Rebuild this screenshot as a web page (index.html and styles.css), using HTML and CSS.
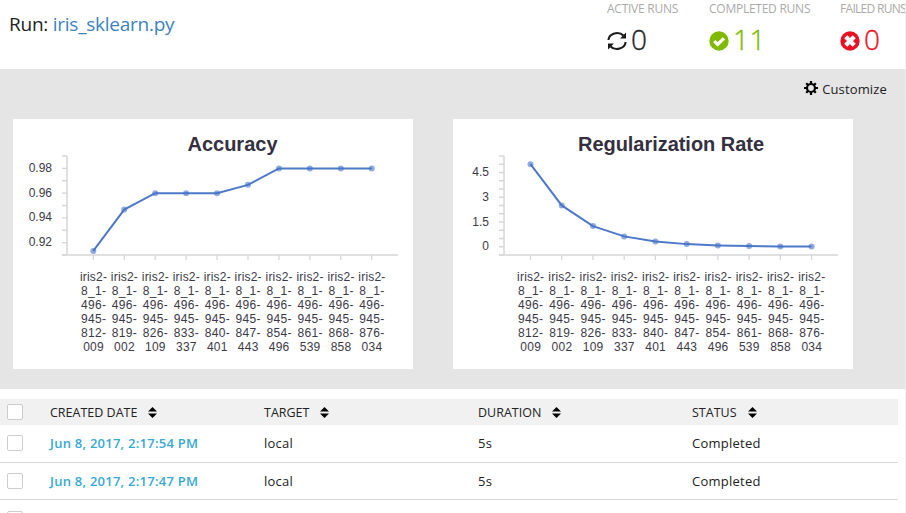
FILE: index.html
```html
<!DOCTYPE html>
<html lang="en">
<head>
<meta charset="utf-8">
<title>Run: iris_sklearn.py</title>
<link rel="stylesheet" href="styles.css">
</head>
<body>
<div class="page">
  <header class="top">
    <h1 class="title"><span class="run">Run:</span> <a>iris_sklearn.py</a></h1>
    <div class="stats">
      <div class="stat active">
        <div class="label">ACTIVE RUNS</div>
        <div class="value"><svg width="20" height="20" viewBox="0 0 20 20"><g fill="none" stroke="#1b1b1b" stroke-width="2.1"><path d="M1.4 9C2 2.4 11.5-.4 16.4 4.6M18.6 11C18 17.6 8.5 20.4 3.6 15.4"/></g><path fill="#1b1b1b" d="M19 1.4v6h-6zM1 18.6v-6h6z"/></svg><span>0</span></div>
      </div>
      <div class="stat completed">
        <div class="label">COMPLETED RUNS</div>
        <div class="value"><svg width="20" height="20" viewBox="0 0 20 20"><circle cx="10" cy="10" r="9.7" fill="#7fba00"/><path d="M5.2 10.2l3.4 3.3 6.3-6.2" fill="none" stroke="#fff" stroke-width="3.2"/></svg><span>11</span></div>
      </div>
      <div class="stat failed">
        <div class="label">FAILED RUNS</div>
        <div class="value"><svg width="20" height="20" viewBox="0 0 20 20"><circle cx="10" cy="10" r="9.7" fill="#e81123"/><path d="M5.8 5.8l8.4 8.4M14.2 5.8l-8.4 8.4" stroke="#fff" stroke-width="4.4"/></svg><span>0</span></div>
      </div>
    </div>
  </header>
  <section class="panel">
    <div class="toolbar"><svg width="14" height="14" viewBox="-7 -7 14 14"><circle r="4" fill="none" stroke="#000" stroke-width="2.2"/><path d="M0-7V-4M0 7V4M-7 0H-4M7 0H4M-4.8-4.8L-3-3M4.8 4.8L3 3M4.8-4.8L3-3M-4.8 4.8L-3 3" stroke="#000" stroke-width="2.2"/></svg><span>Customize</span></div>
    <div class="cards">
      <div class="card"><svg id="accuracy" width="400" height="250"></svg></div>
      <div class="card"><svg id="rate" width="400" height="250"></svg></div>
    </div>
  </section>
  <section class="table">
    <div class="row head">
      <i class="box"></i>
      <span>CREATED DATE<svg class="sort" viewBox="0 0 9 11"><path d="M4.5 0L9 4.6H0zM4.5 11L9 6.4H0z"/></svg></span>
      <span>TARGET<svg class="sort" viewBox="0 0 9 11"><path d="M4.5 0L9 4.6H0zM4.5 11L9 6.4H0z"/></svg></span>
      <span>DURATION<svg class="sort" viewBox="0 0 9 11"><path d="M4.5 0L9 4.6H0zM4.5 11L9 6.4H0z"/></svg></span>
      <span>STATUS<svg class="sort" viewBox="0 0 9 11"><path d="M4.5 0L9 4.6H0zM4.5 11L9 6.4H0z"/></svg></span>
    </div>
    <div class="row first"><i class="box"></i><a class="date">Jun 8, 2017, 2:17:54 PM</a><span>local</span><span>5s</span><span class="status">Completed</span></div>
    <div class="row"><i class="box"></i><a class="date">Jun 8, 2017, 2:17:47 PM</a><span>local</span><span>5s</span><span class="status">Completed</span></div>
    <div class="row last"><i class="box"></i></div>
  </section>
</div>
<script src="charts.js"></script>
</body>
</html>
```
FILE: styles.css
```css
* { box-sizing: border-box; }
body {
  margin: 0;
  background: #fff;
  color: #222;
  font-family: "Open Sans", "Noto Sans", sans-serif;
  overflow: hidden;
}
.page {
  width: 906px;
  height: 513px;
  overflow: hidden;
  border-right: 1px solid #eee;
}
.top {
  height: 69px;
  display: flex;
  justify-content: space-between;
  overflow: hidden;
}
.title {
  margin: 9px 0 0 9px;
  font-size: 19px;
  line-height: 30px;
  font-weight: 400;
  letter-spacing: -0.25px;
  white-space: nowrap;
}
.title a { color: #3b83c0; }
.stats {
  display: flex;
  width: 298px;
  flex: none;
}
.stat { flex: none; white-space: nowrap; }
.active { width: 102px; }
.completed { width: 131px; color: #7fba00; }
.failed { color: #e81123; }
.label {
  margin-top: 1px;
  color: #aaa;
  font-size: 12px;
  line-height: 16px;
  letter-spacing: -0.25px;
}
.failed .label { letter-spacing: -0.7px; }
.value {
  display: flex;
  align-items: center;
  height: 40px;
  margin-top: 2px;
  font-size: 28px;
  line-height: 40px;
  font-weight: 300;
  letter-spacing: .6px;
  -webkit-text-stroke: .35px currentColor;
}
.value svg { margin-top: 3px; margin-right: 4px; }
.panel { height: 320px; background: #e5e5e5; }
.toolbar {
  height: 50px;
  padding: 0 18px 10px 0;
  display: flex;
  justify-content: flex-end;
  align-items: center;
  gap: 4px;
  font-size: 13px;
  letter-spacing: .15px;
}
.toolbar svg { margin-top: -2px; }
.cards { display: flex; gap: 40px; padding-left: 13px; }
.card { width: 400px; height: 250px; background: #fff; }
.card svg { display: block; font-family: "Liberation Sans", Arial, sans-serif; fill: #3c3947; }
.chart-title { font-size: 20px; font-weight: 700; fill: #34303f; }
.tick { font-size: 12px; }
.axis { stroke: #e0e0e0; stroke-width: 2; fill: none; }
.ticks { stroke: #d6d6d6; stroke-width: 1.3; fill: none; }
.series { stroke: #4d79c9; stroke-width: 2; fill: none; }
.point { fill: #4472ca; fill-opacity: .6; }
.table { width: 898px; margin-top: 10px; font-size: 13px; letter-spacing: .25px; }
.row {
  display: grid;
  grid-template-columns: 43px 214px 214px 214px 1fr;
  align-items: center;
  height: 37px;
  padding-left: 7px;
  border-bottom: 1px solid #d8d8d8;
}
.head { height: 26px; background: #f1f1f1; border: 0; font-size: 12.5px; letter-spacing: 0; }
.first { height: 38px; padding-bottom: 2px; }
.last { border: 0; }
.box {
  width: 16px;
  height: 16px;
  background: #fff;
  border: 1px solid #ccc;
  border-radius: 2px;
}
.sort { width: 9px; height: 11px; margin-left: 11px; fill: #000; vertical-align: -1px; }
.date { color: #36a9d6; font-weight: 600; }
```
FILE: charts.js
```js
const NS = "http://www.w3.org/2000/svg";
const runs = ["812-009", "819-002", "826-109", "833-337", "840-401", "847-443", "854-496", "861-539", "868-858", "876-034"];

function add(parent, name, attrs, text) {
  const el = document.createElementNS(NS, name);
  for (const key in attrs) el.setAttribute(key, attrs[key]);
  if (text !== undefined) el.textContent = text;
  parent.appendChild(el);
  return el;
}

function drawChart(c) {
  const svg = document.getElementById(c.id);
  add(svg, "text", { x: c.titleX, y: 32, "text-anchor": "middle", class: "chart-title", textLength: c.titleWidth }, c.title);
  add(svg, "path", { class: "axis", d: `M${c.left} 37V136M${c.left - 5} 136H${c.right}` });
  let d = "";
  for (let i = 0; i <= c.steps; i++) d += `M${c.left - 5} ${37 + i * 99 / c.steps}h5`;
  runs.forEach((_, i) => { d += `M${c.x0 + i * c.dx} 136v5`; });
  add(svg, "path", { class: "ticks", d });
  c.labels.forEach(([value, y]) => add(svg, "text", { x: c.labelX, y, "text-anchor": "end", class: "tick" }, value));
  const points = c.values.map((v, i) => [c.x0 + i * c.dx, c.scale(v)]);
  add(svg, "polyline", { class: "series", points: points.join(" ") });
  points.forEach(([cx, cy]) => add(svg, "circle", { class: "point", cx, cy, r: 3 }));
  runs.forEach((run, i) => {
    const [a, b] = run.split("-");
    const parts = [["iris2-", 27], ["8_1-", 25], ["496-", 25], ["945-", 25], [a + "-", 25], [b, 20.5]];
    parts.forEach(([text, width], n) => add(svg, "text", {
      x: c.x0 + i * c.dx + 0.1, y: 162 + n * 14, "text-anchor": "middle", class: "tick", textLength: width
    }, text));
  });
}

drawChart({
  id: "accuracy", title: "Accuracy", titleX: 219.5, titleWidth: 90,
  left: 54, right: 385, steps: 8, x0: 80.3, dx: 30.94, labelX: 39,
  labels: [["0.98", 53], ["0.96", 78], ["0.94", 102], ["0.92", 127]],
  values: [0.9133, 0.9467, 0.96, 0.96, 0.96, 0.9667, 0.98, 0.98, 0.98, 0.98],
  scale: v => 49.4 + (0.98 - v) * 1237.5
});
drawChart({
  id: "rate", title: "Regularization Rate", titleX: 218, titleWidth: 186,
  left: 51, right: 385, steps: 12, x0: 77.5, dx: 31.23, labelX: 36,
  labels: [["4.5", 57], ["3", 82], ["1.5", 107], ["0", 131]],
  values: [5, 2.5, 1.25, 0.625, 0.3125, 0.15625, 0.078, 0.039, 0.0195, 0.0098],
  scale: v => 127.7 - v * 16.5
});
```
